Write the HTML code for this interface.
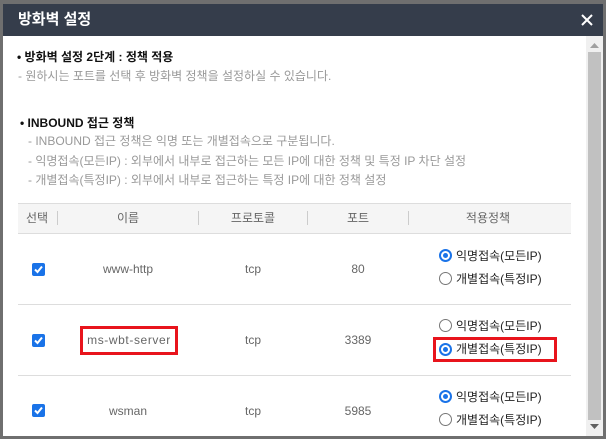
<!DOCTYPE html>
<html><head><meta charset="utf-8"><style>
*{margin:0;padding:0;box-sizing:border-box}
body{width:606px;height:439px;background:#6f6f6f;font-family:"Liberation Sans","Noto Sans CJK KR",sans-serif;position:relative;overflow:hidden}
.a{position:absolute;white-space:nowrap}
#win{left:3px;top:4px;width:600px;height:432px;background:#fff}
#title{left:3px;top:4px;width:600px;height:32px;background:#353d4b;color:#fff;font-size:15px;font-weight:bold;line-height:32px;padding-left:15px}
.t{font-size:12px;line-height:14px}
.c{font-size:12px;color:#666;transform:translateX(-50%);line-height:14px}
.sep{top:211px;width:1px;height:14px;background:#ccc}
.hl{left:18px;width:553px;height:1px;background:#ddd}
.cb{left:32px;width:13px;height:13px;background:#1a73e8;border-radius:2px}
.r{left:439px;width:13px;height:13px;border-radius:50%;border:1px solid #777;background:#fff}
.on{border:2px solid #1a73e8}
.on::after{content:"";position:absolute;left:2px;top:2px;width:5px;height:5px;border-radius:50%;background:#1a73e8}
.rl{left:456px;font-size:12px;color:#222;line-height:14px}
.red{border:3px solid #e8141c}
</style></head><body>
<div class="a" id="win"></div>
<div class="a" id="title">방화벽 설정</div>
<svg class="a" style="left:581px;top:14px" width="12" height="12"><path d="M1 1L11 11M11 1L1 11" stroke="#fff" stroke-width="2"/></svg>

<div class="a t" style="left:17px;top:50px;font-weight:bold;color:#111">• 방화벽 설정 2단계 : 정책 적용</div>
<div class="a t" style="left:18px;top:69px;color:#999">- 원하시는 포트를 선택 후 방화벽 정책을 설정하실 수 있습니다.</div>
<div class="a t" style="left:20px;top:116px;font-weight:bold;color:#111">• INBOUND 접근 정책</div>
<div class="a t" style="left:28px;top:134px;color:#999">- INBOUND 접근 정책은 익명 또는 개별접속으로 구분됩니다.</div>
<div class="a t" style="left:28px;top:154px;color:#999">- 익명접속(모든IP) : 외부에서 내부로 접근하는 모든 IP에 대한 정책 및 특정 IP 차단 설정</div>
<div class="a t" style="left:28px;top:173px;color:#999">- 개별접속(특정IP) : 외부에서 내부로 접근하는 특정 IP에 대한 정책 설정</div>

<div class="a" style="left:18px;top:203px;width:553px;height:31px;background:#f5f5f5;border-top:1px solid #ddd;border-bottom:1px solid #ddd"></div>
<div class="a c" style="left:37px;top:211px">선택</div>
<div class="a sep" style="left:57px"></div>
<div class="a c" style="left:128px;top:211px">이름</div>
<div class="a sep" style="left:198px"></div>
<div class="a c" style="left:253px;top:211px">프로토콜</div>
<div class="a sep" style="left:307px"></div>
<div class="a c" style="left:358px;top:211px">포트</div>
<div class="a sep" style="left:408px"></div>
<div class="a c" style="left:488px;top:211px">적용정책</div>
<div class="a hl" style="top:304px"></div>
<div class="a hl" style="top:375px"></div>

<svg class="a cb" style="top:263px" viewBox="0 0 13 13"><path d="M3 6.5L5.5 9L10 3.5" stroke="#fff" stroke-width="2" fill="none"/></svg>
<div class="a c" style="left:128px;top:262px">www-http</div>
<div class="a c" style="left:253px;top:262px">tcp</div>
<div class="a c" style="left:358px;top:262px">80</div>
<div class="a r on" style="top:249px"></div><div class="a rl" style="top:249px">익명접속(모든IP)</div>
<div class="a r" style="top:272px"></div><div class="a rl" style="top:272px">개별접속(특정IP)</div>

<svg class="a cb" style="top:334px" viewBox="0 0 13 13"><path d="M3 6.5L5.5 9L10 3.5" stroke="#fff" stroke-width="2" fill="none"/></svg>
<div class="a red" style="left:80px;top:326px;width:98px;height:29px"></div>
<div class="a c" style="left:129px;top:333px;letter-spacing:0.6px">ms-wbt-server</div>
<div class="a c" style="left:253px;top:333px">tcp</div>
<div class="a c" style="left:358px;top:333px">3389</div>
<div class="a r" style="top:319px"></div><div class="a rl" style="top:319px">익명접속(모든IP)</div>
<div class="a red" style="left:433px;top:337px;width:124px;height:25px"></div>
<div class="a r on" style="top:343px"></div><div class="a rl" style="top:342px">개별접속(특정IP)</div>

<svg class="a cb" style="top:404px" viewBox="0 0 13 13"><path d="M3 6.5L5.5 9L10 3.5" stroke="#fff" stroke-width="2" fill="none"/></svg>
<div class="a c" style="left:128px;top:404px">wsman</div>
<div class="a c" style="left:253px;top:404px">tcp</div>
<div class="a c" style="left:358px;top:404px">5985</div>
<div class="a r on" style="top:390px"></div><div class="a rl" style="top:390px">익명접속(모든IP)</div>
<div class="a r" style="top:413px"></div><div class="a rl" style="top:413px">개별접속(특정IP)</div>

<div class="a" style="left:586px;top:36px;width:17px;height:400px;background:#f0f0f0"></div>
<div class="a" style="left:588px;top:52px;width:13px;height:368px;background:#c1c1c1"></div>
<svg class="a" style="left:590px;top:42px" width="9" height="6"><path d="M0 6L4.5 1L9 6Z" fill="#a0a0a0"/></svg>
<svg class="a" style="left:590px;top:424px" width="9" height="6"><path d="M0 0L4.5 5L9 0Z" fill="#606060"/></svg>
</body></html>
